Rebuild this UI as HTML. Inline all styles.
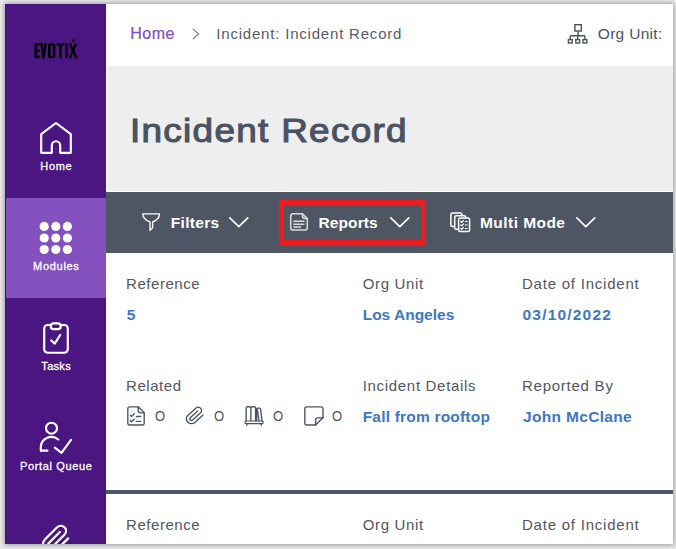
<!DOCTYPE html>
<html><head><meta charset="utf-8">
<style>
*{margin:0;padding:0;box-sizing:border-box}
html,body{width:676px;height:549px;overflow:hidden;background:#ebebeb;font-family:"Liberation Sans",sans-serif}
.a{position:absolute;white-space:nowrap;line-height:1}
#frame{position:absolute;left:5px;top:4px;width:668px;height:540px;background:#fff;box-shadow:0 0 5px 1px rgba(0,0,0,.35)}
#side{position:absolute;left:5px;top:4px;width:101px;height:540px;background:#4b1682;border-left:1px solid #2b2b2b}
#hl{position:absolute;left:6px;top:198px;width:100px;height:100px;background:#8350be}
#hdr{position:absolute;left:106px;top:4px;width:567px;height:62px;background:#fff}
#ttl{position:absolute;left:107px;top:66px;width:566px;height:125px;background:#eeeeee}
#tb{position:absolute;left:106px;top:192px;width:567px;height:61px;background:#4e5563}
#sep{position:absolute;left:106px;top:490px;width:567px;height:4px;background:#4e5563}
.st{color:#fff;font-size:11px;width:100px;left:6px;text-align:center;-webkit-text-stroke:.3px #fff}
.lbl{font-size:15px;color:#535764}
.val{font-size:15.5px;color:#3b78c4;font-weight:bold}
.tbt{font-size:15.5px;color:#fff;font-weight:bold}
.z{font-size:14.5px;color:#4a5263;transform:scaleX(.9);transform-origin:0 0}
</style></head><body>
<div id="frame"></div>
<div id="side"></div>
<div id="hl"></div>
<div id="hdr"></div>
<div id="ttl"></div>
<div id="tb"></div>
<div id="sep"></div>

<!-- logo + sidebar icons -->
<svg class="a" style="left:0;top:0" width="110" height="544" viewBox="0 0 110 544">
  <g fill="#000">
    <path d="M34.5,43.1 H40.2 V45.5 H37.1 V49.5 H39.8 V51.9 H37.1 V55.8 H40.2 V58.2 H34.5 Z"/>
    <path d="M40.4,43.1 H43 L43.6,53.5 L44.1,43.1 H46.7 L44.9,58.2 H42.2 Z"/>
    <path fill-rule="evenodd" d="M50.6,43.1 H52.8 A2.6,2.6 0 0 1 55.4,45.7 V55.6 A2.6,2.6 0 0 1 52.8,58.2 H50.6 A2.6,2.6 0 0 1 48,55.6 V45.7 A2.6,2.6 0 0 1 50.6,43.1 Z M51.2,45.5 A0.6,0.6 0 0 0 50.6,46.1 V55.2 A0.6,0.6 0 0 0 51.2,55.8 H52.2 A0.6,0.6 0 0 0 52.8,55.2 V46.1 A0.6,0.6 0 0 0 52.2,45.5 Z"/>
    <path d="M56.5,43.1 H64.3 V45.5 H61.6 V58.2 H59.2 V45.5 H56.5 Z"/>
    <rect x="65.4" y="43.1" width="2.5" height="15.1"/>
    <path d="M68.6,43.1 H71.3 L73,48.3 L74.8,43.1 H77.4 L74.5,50.5 L77.6,58.2 H74.9 L73,52.8 L71.2,58.2 H68.5 L71.6,50.5 Z"/>
    <circle cx="73.4" cy="40.8" r="1.35"/>
  </g>
  <g fill="none" stroke="#fff" stroke-width="2.15" stroke-linejoin="round" stroke-linecap="round">
    <!-- home -->
    <path d="M41.2,152.8 V134.2 L56,123 L70.8,134.2 V152.8 H60.2 V145.4 A4.2,4.2 0 0 0 51.8,145.4 V152.8 Z"/>
    <!-- tasks -->
    <rect x="44.2" y="325" width="23.6" height="27.7" rx="3.5"/>
    <rect x="50.7" y="323.3" width="10.1" height="5.8" rx="2.9" fill="#4b1682"/>
    <path d="M51.2,340.5 L54.8,343.6 L60.3,334.8"/>
    <!-- portal queue -->
    <circle cx="51.5" cy="428.2" r="5.5"/>
    <path d="M40.8,450.6 V447 A10.6,10.6 0 0 1 58.3,439.5"/>
    <path d="M41,450.6 H47.5"/>
    <path d="M54.8,447.6 L61.5,452.8 L71,439.8"/>
  </g>
  <!-- paperclip (feather) -->
  <g transform="translate(60.8,531) scale(1.3)">
    <path fill="none" stroke="#fff" stroke-width="1.7" stroke-linecap="round" stroke-linejoin="round" d="M21.44,11.05 l-9.19,9.19 a6,6 0 0 1 -8.49,-8.49 l9.19,-9.19 a4,4 0 0 1 5.66,5.66 l-9.2,9.19 a2,2 0 0 1 -2.83,-2.83 l8.49,-8.48" transform="translate(-15.78,-5.39) translate(0,0)"/>
  </g>
  <g fill="#fff">
    <circle cx="44.2" cy="226.4" r="4.6"/><circle cx="55.8" cy="226.4" r="4.6"/><circle cx="67.4" cy="226.4" r="4.6"/>
    <circle cx="44.2" cy="238" r="4.6"/><circle cx="55.8" cy="238" r="4.6"/><circle cx="67.4" cy="238" r="4.6"/>
    <circle cx="44.2" cy="249.5" r="4.6"/><circle cx="55.8" cy="249.5" r="4.6"/><circle cx="67.4" cy="249.5" r="4.6"/>
  </g>
</svg>
<div class="a st" style="top:160.5px;letter-spacing:.7px;text-indent:.7px">Home</div>
<div class="a st" style="top:260.5px;letter-spacing:.7px;text-indent:.7px">Modules</div>
<div class="a st" style="top:360.5px;letter-spacing:.3px;text-indent:.3px">Tasks</div>
<div class="a st" style="top:460.5px;letter-spacing:.65px;text-indent:.65px">Portal Queue</div>

<!-- header -->
<div class="a" style="left:130.3px;top:25.5px;font-size:16px;color:#7e4fc0;letter-spacing:.5px;-webkit-text-stroke:.2px #7e4fc0">Home</div>
<svg class="a" style="left:0;top:0" width="676" height="66">
  <path d="M192.8,28.8 L198.6,34 L192.8,39.2" fill="none" stroke="#75757d" stroke-width="1.1"/>
  <g fill="none" stroke="#4a5263" stroke-width="1.4">
    <rect x="574.9" y="24.7" width="6.4" height="6.3"/>
    <path d="M578.1,31 V35.7 M570.3,35.7 H584.9 M570.3,35.7 V39 M577.7,35.7 V39 M584.9,35.7 V39"/>
    <rect x="568.4" y="39.6" width="3.8" height="3.4"/>
    <rect x="575.8" y="39.6" width="3.8" height="3.4"/>
    <rect x="583" y="39.6" width="3.8" height="3.4"/>
  </g>
</svg>
<div class="a" style="left:216.3px;top:26px;font-size:15px;color:#5a5b66;letter-spacing:.8px">Incident: Incident Record</div>
<div class="a" style="left:597.8px;top:25.5px;font-size:15.5px;color:#4a5263;letter-spacing:.3px">Org Unit:</div>

<!-- title -->
<div class="a" style="left:130px;top:113px;font-size:34px;-webkit-text-stroke:1.1px #4a5263;color:#4a5263;letter-spacing:1.2px;transform:scaleX(1.085);transform-origin:0 0">Incident Record</div>

<!-- toolbar -->
<svg class="a" style="left:0;top:0" width="676" height="260">
  <g fill="none" stroke="#fff" stroke-width="1.35" stroke-linejoin="round" stroke-linecap="round">
    <path d="M142.8,213.8 H159.5 C159.5,218 156.5,220.5 152.6,222 V228 L150,230.3 V222 C146,220.5 142.8,218 142.8,213.8 Z"/>
  </g>
  <g fill="none" stroke="#fff" stroke-width="1.65" stroke-linejoin="round" stroke-linecap="round">
    <path d="M229.8,217.8 L238.8,226.6 L247.8,217.8"/>
    <path d="M390.8,217.8 L399.8,226.6 L408.8,217.8"/>
    <path d="M576.8,217.8 L585.8,226.6 L594.8,217.8"/>
  </g>
  <g fill="none" stroke="#dcdcdc" stroke-width="1.5" stroke-linejoin="round">
    <path d="M293,213.8 H302.5 L307.3,218.6 V227.5 A2.6,2.6 0 0 1 304.7,230.1 H293.3 A2.6,2.6 0 0 1 290.7,227.5 V216.4 A2.6,2.6 0 0 1 293.3,213.8 Z"/>
    <path d="M302.5,213.8 V216 A2.6,2.6 0 0 0 305,218.6 H307.3"/>
    <path d="M293.3,221.3 H304.5 M293.3,224.3 H304.5 M293.3,227 H301"/>
  </g>
  <rect x="281.5" y="202.5" width="142" height="40" fill="none" stroke="#ec1c24" stroke-width="5"/>
  <g fill="#4e5563" stroke="#fff" stroke-width="1.5" stroke-linejoin="round">
    <rect x="450.9" y="212.9" width="11" height="13.5" rx="1.5"/>
    <rect x="454.7" y="215.7" width="11" height="13.5" rx="1.5"/>
    <rect x="458.6" y="218" width="11" height="13.5" rx="1.5"/>
  </g>
  <g fill="none" stroke="#fff" stroke-width="1.2">
    <path d="M460.5,221 L461.8,222.3 L463.8,220.2 M460.5,224.5 L461.8,225.8 L463.8,223.7 M460.5,228 L461.8,229.3 L463.8,227.2"/>
    <path d="M464.8,221.5 H467.6 M464.8,225 H467.6 M464.8,228.5 H467.6"/>
  </g>
</svg>
<div class="a tbt" style="left:170.8px;top:215px;letter-spacing:.3px">Filters</div>
<div class="a tbt" style="left:318.5px;top:215px;letter-spacing:.1px">Reports</div>
<div class="a tbt" style="left:480px;top:215px;letter-spacing:.45px">Multi Mode</div>

<!-- row 1 -->
<div class="a lbl" style="left:126px;top:275.8px;letter-spacing:.55px">Reference</div>
<div class="a lbl" style="left:362.7px;top:275.8px;letter-spacing:.65px">Org Unit</div>
<div class="a lbl" style="left:522px;top:275.8px;letter-spacing:.78px">Date of Incident</div>
<div class="a val" style="left:126.8px;top:307px">5</div>
<div class="a val" style="left:362.7px;top:307px;letter-spacing:0px">Los Angeles</div>
<div class="a val" style="left:522.5px;top:307px;letter-spacing:1.2px">03/10/2022</div>

<!-- row 2 -->
<div class="a lbl" style="left:126px;top:378.2px;letter-spacing:.56px">Related</div>
<div class="a lbl" style="left:362.7px;top:378.2px;letter-spacing:.69px">Incident Details</div>
<div class="a lbl" style="left:522px;top:378.2px;letter-spacing:.75px">Reported By</div>
<div class="a val" style="left:362.7px;top:409px;letter-spacing:.2px">Fall from rooftop</div>
<div class="a val" style="left:523px;top:409px;letter-spacing:.33px">John McClane</div>

<svg class="a" style="left:0;top:0" width="676" height="549">
  <g fill="none" stroke="#4a5263" stroke-width="1.35" stroke-linejoin="round" stroke-linecap="round">
    <!-- doc check -->
    <path d="M129.8,406.8 H138.2 L144.2,412.8 V423.2 A1.8,1.8 0 0 1 142.4,425 H129.6 A1.8,1.8 0 0 1 127.8,423.2 V408.8 A2,2 0 0 1 129.8,406.8 Z"/>
    <path d="M138.2,406.8 V410.8 A2,2 0 0 0 140.2,412.8 H144.2"/>
    <path d="M130.3,415.3 L131.6,416.6 L134.2,413.8 M130.3,420.5 L131.6,421.8 L134.2,419.2 M136.4,416.5 H140.7 M136.4,421.4 H140.7"/>
    <!-- books -->
    <path d="M246.2,420.8 V408 A1.3,1.3 0 0 1 247.5,406.7 H249.6 A1.3,1.3 0 0 1 250.9,408 V420.8 M250.9,420.8 V408 A1.3,1.3 0 0 1 252.2,406.7 H254.3 A1.3,1.3 0 0 1 255.6,408 V420.8 M256.6,420.8 V409.4 A1.3,1.3 0 0 1 257.9,408.1 H259.4 A1.3,1.3 0 0 1 260.6,409 L262,420.8 M257.3,409 L259,420.8"/>
    <rect x="244.9" y="421" width="18.3" height="2.6" rx="1.3" stroke-width="1.2"/>
    <path d="M246.8,423.8 V425.3 M261.3,423.8 V425.3"/>
    <!-- note -->
    <path d="M306.8,406.8 H321 A2,2 0 0 1 323,408.8 V417.8 L315.6,425 H306.8 A2,2 0 0 1 304.8,423 V408.8 A2,2 0 0 1 306.8,406.8 Z"/>
    <path d="M323,417.8 H317.6 A2,2 0 0 0 315.6,419.8 V425"/>
  </g>
  <!-- paperclip small -->
  <path fill="none" stroke="#4a5263" stroke-width="1.35" stroke-linecap="round" stroke-linejoin="round" vector-effect="non-scaling-stroke" transform="translate(184.6,406.2) scale(0.86,0.79)" d="M21.44,11.05 l-9.19,9.19 a6,6 0 0 1 -8.49,-8.49 l9.19,-9.19 a4,4 0 0 1 5.66,5.66 l-9.2,9.19 a2,2 0 0 1 -2.83,-2.83 l8.49,-8.48"/>
</svg>
<div class="a z" style="left:154.5px;top:409.3px">O</div>
<div class="a z" style="left:213.5px;top:409.3px">O</div>
<div class="a z" style="left:273px;top:409.3px">O</div>
<div class="a z" style="left:332px;top:409.3px">O</div>

<!-- row 3 -->
<div class="a lbl" style="left:126px;top:517.2px;letter-spacing:.55px">Reference</div>
<div class="a lbl" style="left:362.7px;top:517.2px;letter-spacing:.65px">Org Unit</div>
<div class="a lbl" style="left:522px;top:517.2px;letter-spacing:.78px">Date of Incident</div>
</body></html>
